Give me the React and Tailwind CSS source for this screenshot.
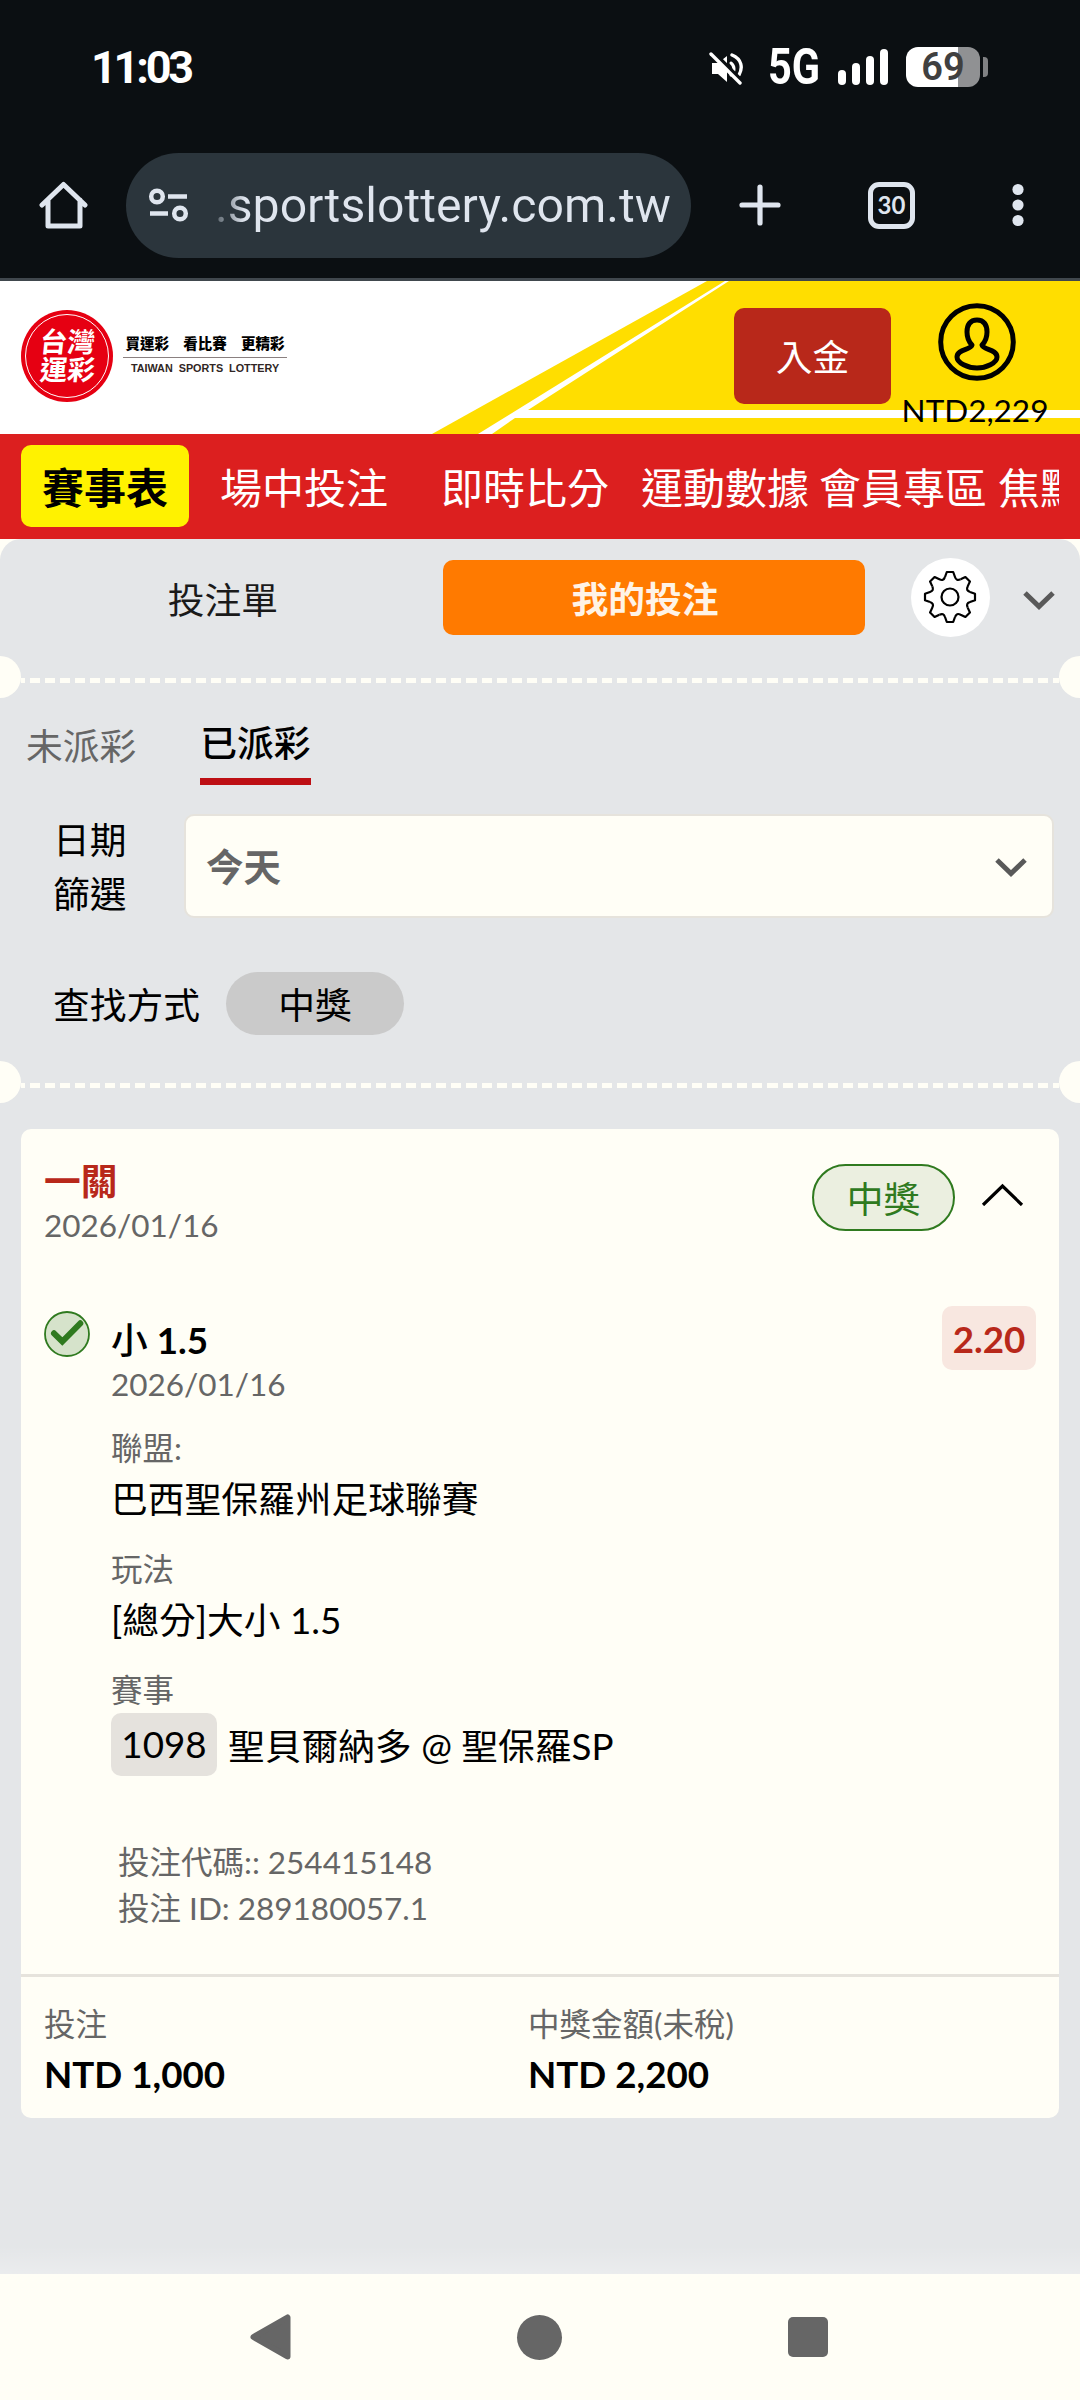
import React from "react";

const NAV_ITEMS = [
  { label: "場中投注", className: "ml-[31px]" },
  { label: "即時比分", className: "ml-[53px]" },
  { label: "運動數據", className: "ml-[32px]" },
  { label: "會員專區", className: "ml-[10px]" },
  { label: "焦點", className: "ml-[11px]" },
];

const BET = {
  title: "一關",
  date: "2026/01/16",
  status: "中獎",
  pick: "小",
  line: "1.5",
  odds: "2.20",
  league: "巴西聖保羅州足球聯賽",
  market: "[總分]大小 1.5",
  eventNo: "1098",
  event: "聖貝爾納多 @ 聖保羅SP",
  code: "254415148",
  id: "289180057.1",
  stake: "NTD 1,000",
  payout: "NTD 2,200",
};

function StatusBar() {
  return (
    <div className="flex h-[134px] items-center pl-[91px] pr-[92px] text-white font-[Roboto,sans-serif]">
      <span className="text-[45px] font-bold leading-none tracking-[-3.2px]">11:03</span>
      <svg className="ml-auto mt-1" width="34" height="34" viewBox="0 0 34 34" fill="none">
        <path d="M3 11h6l9-7v26l-9-8H3z" fill="#fff" />
        <path d="M22 11c4 3 4 9 0 12" stroke="#fff" strokeWidth="3" strokeLinecap="round" />
        <path d="M23 3c10 4 11 13 7 20" stroke="#fff" strokeWidth="3.4" strokeLinecap="round" />
        <path d="M4 0l30 30" stroke="#0b0f12" strokeWidth="4" />
        <path d="M2 2l29 29" stroke="#fff" strokeWidth="3.4" strokeLinecap="round" />
      </svg>
      <span className="ml-[25px] w-[53px] origin-left scale-x-[0.83] text-[50px] font-bold leading-none">5G</span>
      <svg className="ml-[17px]" width="51" height="37" viewBox="0 0 51 37" fill="#fff">
        <rect x="0" y="21" width="8" height="15" rx="4" />
        <rect x="14" y="14" width="8" height="22" rx="4" />
        <rect x="28" y="7" width="8" height="29" rx="4" />
        <rect x="42" y="0" width="8" height="36" rx="4" />
      </svg>
      <div className="ml-[17px] flex h-10 w-[74px] items-center justify-center rounded-xl bg-[linear-gradient(90deg,#fff_70%,#909193_70%)] text-[38px] font-semibold leading-none text-[#404040]">
        69
      </div>
      <div className="ml-[3px] h-5 w-[5px] rounded-r-[4px] bg-[#808183]" />
    </div>
  );
}

function BrowserBar() {
  return (
    <div className="flex h-[144px] items-center pb-0.5 pl-[38px] text-[#dfe5ee]">
      <svg width="50" height="50" viewBox="0 0 50 50" fill="none" stroke="currentColor" strokeWidth="5" strokeLinejoin="round" strokeLinecap="round">
        <path d="M4 25L25.500 4.500 47 25M10 20v26h32V20" />
      </svg>
      <div className="ml-[38px] flex h-[105px] w-[565px] items-center rounded-full bg-[#2b353c] pl-[22px]">
        <svg width="42" height="36" viewBox="0 0 42 36" fill="none" stroke="currentColor" strokeWidth="4.5">
          <circle cx="9" cy="9.500" r="5.8" />
          <path d="M20 9.500h19M2 26.500h18" />
          <circle cx="32" cy="26.500" r="5.8" />
        </svg>
        <span className="ml-[25px] mt-0.5 bg-[linear-gradient(90deg,#59636b_0,#dfe5ee_30px)] bg-clip-text text-[48.2px] leading-[60px] text-transparent font-[Roboto,sans-serif]">
          .sportslottery.com.tw
        </span>
      </div>
      <svg className="ml-[48px]" width="42" height="42" viewBox="0 0 42 42" stroke="currentColor" strokeWidth="5.2" strokeLinecap="round">
        <path d="M21 3v36M3 21h36" />
      </svg>
      <div className="ml-[87px] flex size-[47px] items-center justify-center rounded-[11px] border-5 border-current text-[24px] font-bold font-[Lato,sans-serif]">
        30
      </div>
      <svg className="ml-[97px]" width="12" height="44" viewBox="0 0 12 44" fill="currentColor">
        <circle cx="6" cy="6.500" r="5.6" />
        <circle cx="6" cy="22" r="5.6" />
        <circle cx="6" cy="37.500" r="5.6" />
      </svg>
    </div>
  );
}

function Logo() {
  return (
    <div className="flex items-start pt-[29px]">
      <div className="flex size-[92px] items-center justify-center rounded-full bg-[#e60012] p-1">
        <div className="flex size-full flex-col items-center justify-center rounded-full border-[1.5px] border-white text-[27.5px] font-bold leading-[28px] text-white">
          <span className="-skew-x-6">台灣</span>
          <span className="-skew-x-6">運彩</span>
        </div>
      </div>
      <div className="ml-2.5 mt-[24px] flex w-[164px] flex-col items-center">
        <div className="flex w-[159px] justify-between text-[14.5px] font-black leading-[20px]">
          <span>買運彩</span>
          <span>看比賽</span>
          <span>更精彩</span>
        </div>
        <div className="mt-[3px] h-px w-full bg-[#8a8080]" />
        <div className="mt-[3px] whitespace-pre text-[10.8px] font-bold leading-[14px] text-[#302624] font-['Liberation_Sans',sans-serif]">
          TAIWAN  SPORTS  LOTTERY
        </div>
      </div>
    </div>
  );
}

function Header() {
  return (
    <header className="relative flex h-[153px] items-start bg-white pl-[21px]">
      <svg className="absolute inset-0" width="1080" height="153" viewBox="0 0 1080 153" fill="#ffde00">
        <path d="M432 153L707 0h18L478 153z" />
        <path d="M528 129L729 0h351v129z" />
        <path d="M492 153l23-16h565v16z" />
      </svg>
      <div className="relative">
        <Logo />
      </div>
      <button className="relative ml-[447px] mt-[27px] h-24 w-[157px] rounded-[10px] bg-[#b8281a] pt-[4px] text-[36.75px] text-white">
        入金
      </button>
      <div className="relative ml-[11px] flex w-[146px] flex-col items-center pt-[22px]">
        <svg className="ml-[3px]" width="78" height="78" viewBox="0 0 78 78" fill="none" stroke="#000" strokeWidth="5" strokeLinejoin="round">
          <circle cx="39" cy="39" r="36.3" />
          <path d="M39 17c-7 0-10 5-10 12 0 6 2 10 5 13-1 5-15 4-15 12 0 6 11 11 20 11s20-5 20-11c0-8-14-7-15-12 3-3 5-7 5-13 0-7-3-12-10-12z" />
        </svg>
        <span className="mt-2.5 text-[31.5px] leading-[38px]">NTD2,229</span>
      </div>
    </header>
  );
}

function MainNav() {
  return (
    <nav className="h-[105px] bg-[#dc1f1f] px-[21px] pt-[11px]">
      <div className="flex items-center overflow-hidden whitespace-nowrap text-[42px] text-white">
        <span className="flex h-[82px] w-[168px] shrink-0 items-center justify-center rounded-[10px] bg-[#fff200] pt-[4px] font-bold text-black">
          賽事表
        </span>
        {NAV_ITEMS.map((item) => (
          <span key={item.label} className={`pt-[4px] ${item.className}`}>
            {item.label}
          </span>
        ))}
      </div>
    </nav>
  );
}

function Perforation() {
  return (
    <div className="flex h-[42px] items-center justify-between overflow-hidden">
      <div className="h-[42px] w-[21px] rounded-r-full bg-[#fffef6]" />
      <div className="mt-[7px] h-[5px] flex-1 bg-[repeating-linear-gradient(90deg,#fffef6_0,#fffef6_4px,transparent_4px,transparent_9px,#fffef6_9px,#fffef6_15.05px)]" />
      <div className="h-[42px] w-[21px] rounded-l-full bg-[#fffef6]" />
    </div>
  );
}

function Chevron({ className }) {
  return (
    <svg className={className} width="32" height="19" viewBox="0 0 32 19" fill="none" stroke="#595959" strokeWidth="5">
      <path d="M2 2l14 13.500L30 2" />
    </svg>
  );
}

function Gear() {
  const teeth = [0, 45, 90, 135, 180, 225, 270, 315];
  return (
    <svg width="54" height="54" viewBox="-27 -27 54 54" fill="none" stroke="#000" strokeWidth="2.2" strokeLinejoin="round">
      <circle r="8.5" />
      {teeth.map((deg) => (
        <path
          key={deg}
          transform={`rotate(${deg})`}
          d="M-5-20l1.800-5h6.400l1.800 5C6-17 7.600-16.400 10.600-17.700"
        />
      ))}
    </svg>
  );
}

function SlipTabs() {
  return (
    <div className="flex h-[117px] items-start pl-[22px]">
      <span className="mt-[23px] w-[401px] pl-px text-center text-[36.75px] leading-[76px] text-[#1a1a1a]">投注單</span>
      <button className="ml-5 mt-[21px] h-[75px] w-[422px] rounded-[10px] bg-[#ff7a00] pr-[18px] pt-[5px] text-[36.75px] font-bold text-[#fff3e6]">
        我的投注
      </button>
      <div className="ml-[46px] mt-[19px] flex size-[79px] items-center justify-center rounded-full bg-white pb-px pr-px">
        <Gear />
      </div>
      <Chevron className="ml-[33px] mt-[52px]" />
    </div>
  );
}

function Filters() {
  return (
    <section className="h-[363px]">
      <div className="flex items-start gap-16 pl-[26px] text-[36.75px] leading-[54px]">
        <span className="mt-[21px] text-[#666]">未派彩</span>
        <span className="mt-[18px] h-[69px] border-b-[7px] border-[#bd0f14] font-medium">已派彩</span>
      </div>
      <div className="mt-[28px] flex items-start pl-[53px] pr-[26px]">
        <span className="w-[74px] text-[36.75px] leading-[54px]">日期篩選</span>
        <div className="ml-[57px] mt-[1px] flex h-[104px] flex-1 items-center rounded-[10px] border-2 border-[#e6e3dc] bg-[#fffef6] pl-[20px] pr-[25px]">
          <span className="pt-[2px] text-[37.5px] font-bold text-[#666]">今天</span>
          <Chevron className="ml-auto mt-0.5" />
        </div>
      </div>
      <div className="mt-[51px] flex items-center pl-[53px] text-[36.75px]">
        <span className="pt-[4px]">查找方式</span>
        <span className="ml-[26px] flex h-[63px] w-[178px] items-center justify-center rounded-full bg-[#cacaca] pt-[4px]">中獎</span>
      </div>
    </section>
  );
}

function Field({ label, children }) {
  return (
    <div className="h-[121px]">
      <div className="text-[31.5px] leading-[47px] text-[#666]">{label}</div>
      <div className="text-[36.75px] leading-[55px]">{children}</div>
    </div>
  );
}

function BetCard({ bet }) {
  return (
    <article className="mx-[21px] mt-[26px] h-[989px] rounded-[10px] bg-[#fffef6]">
      <div className="flex h-[177px] items-start pl-[23px] pr-[35px]">
        <div className="pt-[25px]">
          <div className="text-[36.75px] font-bold leading-[55px] text-[#b8281a]">{bet.title}</div>
          <div className="-mt-[6px] text-[31.5px] leading-[44px] text-[#666]">{bet.date}</div>
        </div>
        <span className="ml-auto mt-[35px] flex h-[67px] w-[143px] items-center justify-center rounded-full border-2 border-[#2f7a1f] bg-[#ebefe0] pt-[4px] text-[36.75px] text-[#2f7a1f]">
          {bet.status}
        </span>
        <svg className="ml-[26px] mt-[53px]" width="43" height="24" viewBox="0 0 43 24" fill="none" stroke="#000" strokeWidth="3.2">
          <path d="M2 23L21.500 4 41 23" />
        </svg>
      </div>
      <div className="flex h-[671px] items-start border-b-3 border-[#e6e3dc] pl-[22px] pr-[23px]">
        <svg className="mt-[4px]" width="48" height="48" viewBox="0 0 48 48" fill="none">
          <circle cx="24" cy="24" r="22" fill="#d6e3cb" stroke="#2f7a1f" strokeWidth="1.8" />
          <path d="M11 23.300l8.300 8.200 18-18.200" stroke="#2f7a1f" strokeWidth="6" strokeLinecap="round" />
        </svg>
        <div className="ml-[20px]">
          <div className="mt-[7px] text-[36.75px] font-bold leading-[55px]">
            <span className="font-medium">{bet.pick}</span> {bet.line}
          </div>
          <div className="-mt-[3px] text-[31.5px] leading-[38px] text-[#666]">{bet.date}</div>
          <div className="mt-[22px]">
            <Field label="聯盟:">{bet.league}</Field>
            <Field label="玩法">{bet.market}</Field>
            <Field label="賽事">
              <div className="-mt-[1px] flex items-center">
                <span className="mr-[11px] flex h-[63px] w-[106px] items-center justify-center rounded-[10px] bg-[#e5e2dd]">
                  {bet.eventNo}
                </span>
                <span className="pt-[3px]">{bet.event}</span>
              </div>
            </Field>
          </div>
          <div className="ml-[7px] mt-[51px] text-[31.5px] leading-[46px] text-[#666]">
            <div>投注代碼:: {bet.code}</div>
            <div>投注 ID: {bet.id}</div>
          </div>
        </div>
        <span className="ml-auto flex h-16 w-[94px] items-center justify-center rounded-[10px] bg-[#f8e7e0] pt-[3px] text-[36.75px] font-bold text-[#b8281a]">
          {bet.odds}
        </span>
      </div>
      <div className="grid grid-cols-[484px_1fr] pl-[23px] pt-[24px]">
        <div>
          <div className="text-[31.5px] leading-[47px] text-[#666]">投注</div>
          <div className="text-[36.75px] font-bold leading-[52px]">{bet.stake}</div>
        </div>
        <div>
          <div className="text-[31.5px] leading-[47px] text-[#666]">中獎金額(未稅)</div>
          <div className="text-[36.75px] font-bold leading-[52px]">{bet.payout}</div>
        </div>
      </div>
    </article>
  );
}

function SystemNav() {
  return (
    <div className="flex h-[126px] items-center bg-[#fffef6] pl-[249px]">
      <svg width="44" height="48" viewBox="0 0 44 48" fill="#666" stroke="#666" strokeWidth="6" strokeLinejoin="round">
        <path d="M4.500 24L38.500 4.500v39z" />
      </svg>
      <div className="ml-[224px] size-[45px] rounded-full bg-[#666]" />
      <div className="ml-[226px] size-10 rounded-[5px] bg-[#666]" />
    </div>
  );
}

export default function App() {
  return (
    <div className="flex h-[2400px] w-[1080px] flex-col overflow-hidden bg-[#fffef6] text-black font-[Lato,'Noto_Sans_CJK_TC',sans-serif]">
      <div className="h-[281px] border-b-3 border-[#40474d] bg-[#0b0f12]">
        <StatusBar />
        <BrowserBar />
      </div>
      <Header />
      <MainNav />
      <main className="flex-1 rounded-t-[21px] bg-[#e4e6e8]">
        <SlipTabs />
        <Perforation />
        <Filters />
        <Perforation />
        <BetCard bet={BET} />
      </main>
      <div className="-mt-7 h-7 bg-linear-to-b from-transparent to-white/25" />
      <SystemNav />
    </div>
  );
}
